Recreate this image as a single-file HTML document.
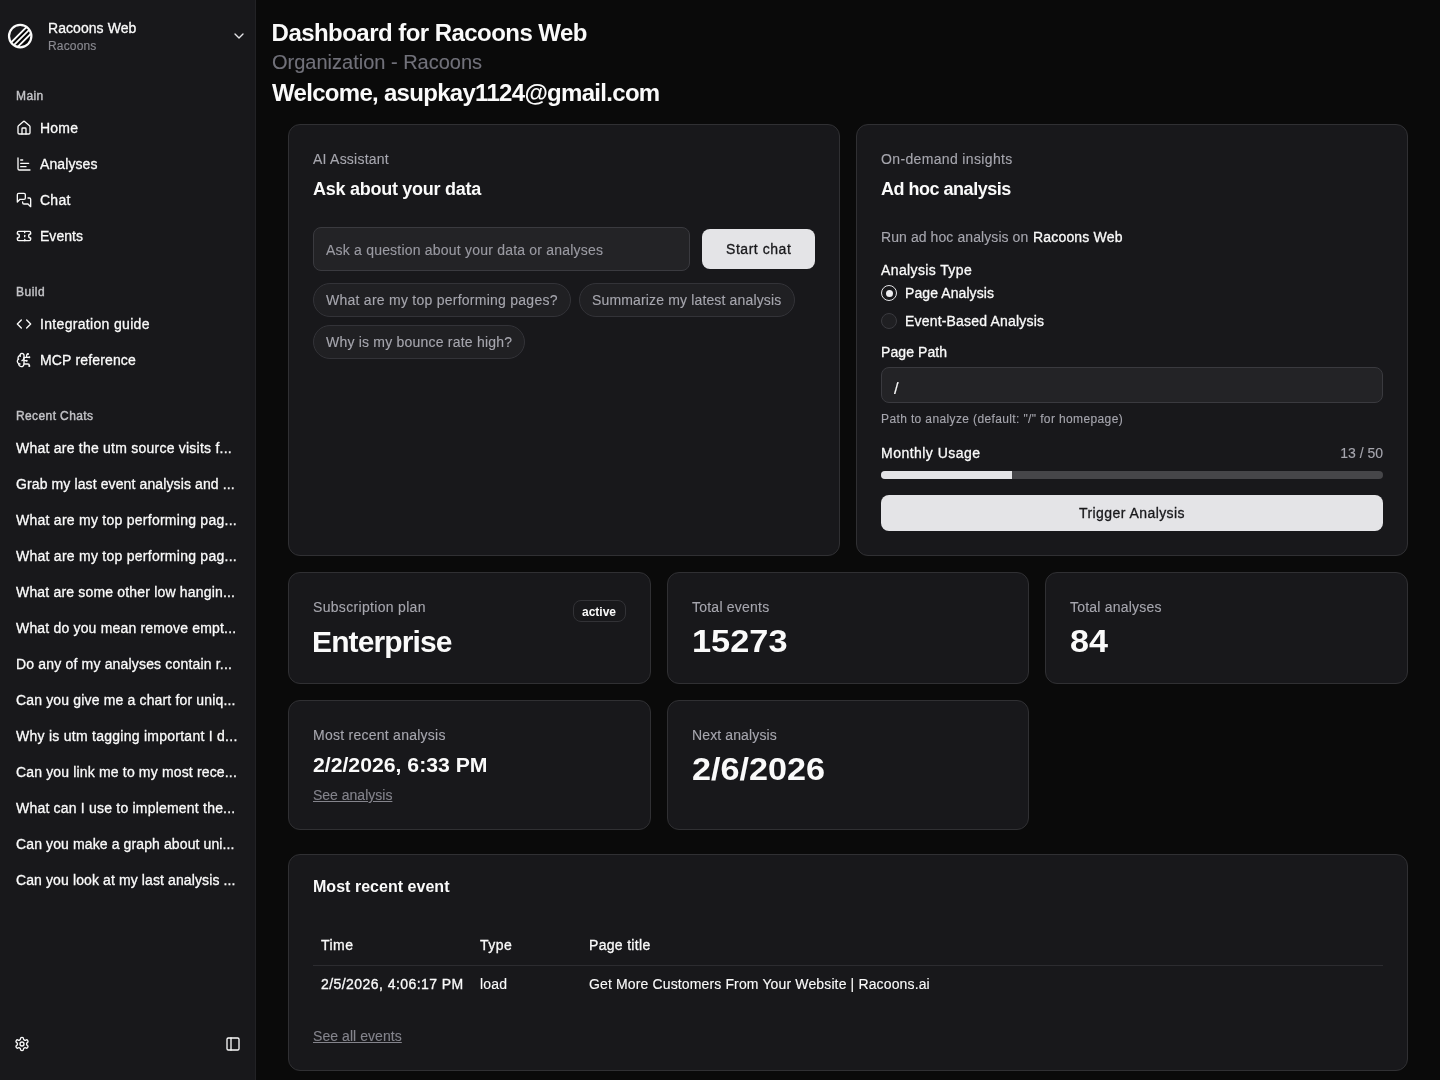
<!DOCTYPE html>
<html lang="en">
<head>
<meta charset="utf-8">
<title>Dashboard for Racoons Web</title>
<style>
*{box-sizing:border-box;margin:0;padding:0}
html,body{width:1440px;height:1080px;overflow:hidden;background:#0a0a0a}
body{font-family:"Liberation Sans",sans-serif;color:#fafafa;font-size:14px;-webkit-font-smoothing:antialiased;position:relative;will-change:transform}
.t{position:absolute;white-space:nowrap;line-height:1;display:block;-webkit-text-stroke:.12px currentColor}
.b{font-weight:700;-webkit-text-stroke:0}
svg{display:block}
/* sidebar */
#sb{position:absolute;left:0;top:0;width:256px;height:1080px;background:#18181b;border-right:1px solid #222225}
.ic{position:absolute;width:16px;height:16px;stroke:#fafafa;fill:none;stroke-width:2;stroke-linecap:round;stroke-linejoin:round}
.lab{font-size:12px;font-weight:400;color:#c2c2c6;-webkit-text-stroke:.4px #c2c2c6}
.m{-webkit-text-stroke:.3px currentColor}
.nav{font-size:14px;font-weight:400;color:#fafafa;left:40px;-webkit-text-stroke:.3px #fafafa}
.chat{font-size:14px;font-weight:400;color:#fafafa;left:16px;-webkit-text-stroke:.3px #fafafa}
/* main */
.card{position:absolute;background:#18181b;border:1px solid #303033;border-radius:12px}
.mut{color:#a6a6ae}
.sx{transform-origin:0 0}
.inp{position:absolute;background:#232326;border:1px solid #3a3a3f;border-radius:8px}
.btn{position:absolute;background:#e4e4e7;border-radius:8px;color:#18181b}
.chip{position:absolute;height:34px;border:1px solid #333338;border-radius:17px;background:#202023}
</style>
</head>
<body>
<div id="sb">
  <svg style="position:absolute;left:7px;top:23px" width="26" height="26" viewBox="-1 -1 26 26" fill="none">
    <clipPath id="lc"><circle cx="12.2" cy="12.1" r="11.2"/></clipPath>
    <g clip-path="url(#lc)"><path d="M-2 23.6 23.6 -2 30 30Z" fill="#050506"/>
    <path d="M-2 23.6 23.6 -2M-2 29 29 -2M-2 34.6 34.6 -2" stroke="#fafafa" stroke-width="1.85"/></g>
    <circle cx="12.2" cy="12.1" r="11.2" stroke="#fafafa" stroke-width="2.2"/>
  </svg>
  <span class="t m" style="left:48px;top:21px;font-size:14px;letter-spacing:0.061px">Racoons Web</span>
  <span class="t" style="left:48px;top:40px;font-size:12px;color:#8b8b92;letter-spacing:0.154px">Racoons</span>
  <svg class="ic" style="left:231px;top:28px;stroke:#e4e4e7" viewBox="0 0 24 24"><path d="m6 9 6 6 6-6"/></svg>

  <span class="t lab" style="left:16px;top:90px;letter-spacing:0.428px">Main</span>
  <svg class="ic" style="left:16px;top:120px" viewBox="0 0 24 24"><path d="M15 21v-8a1 1 0 0 0-1-1h-4a1 1 0 0 0-1 1v8"/><path d="M3 10a2 2 0 0 1 .709-1.528l7-5.999a2 2 0 0 1 2.582 0l7 5.999A2 2 0 0 1 21 10v9a2 2 0 0 1-2 2H5a2 2 0 0 1-2-2z"/></svg>
  <span class="t nav" style="top:121px;letter-spacing:0.214px">Home</span>
  <svg class="ic" style="left:16px;top:156px" viewBox="0 0 24 24"><path d="M3 3v16a2 2 0 0 0 2 2h16"/><path d="M7 16h8"/><path d="M7 11h12"/><path d="M7 6h3"/></svg>
  <span class="t nav" style="top:157px;letter-spacing:0.098px">Analyses</span>
  <svg class="ic" style="left:16px;top:192px" viewBox="0 0 24 24"><path d="M14 9a2 2 0 0 1-2 2H6l-4 4V4a2 2 0 0 1 2-2h8a2 2 0 0 1 2 2z"/><path d="M18 9h2a2 2 0 0 1 2 2v11l-4-4h-6a2 2 0 0 1-2-2v-1"/></svg>
  <span class="t nav" style="top:193px;letter-spacing:0.241px">Chat</span>
  <svg class="ic" style="left:16px;top:228px" viewBox="0 0 24 24"><path d="M2 9a3 3 0 0 1 0 6v2a2 2 0 0 0 2 2h16a2 2 0 0 0 2-2v-2a3 3 0 0 1 0-6V7a2 2 0 0 0-2-2H4a2 2 0 0 0-2 2Z"/><path d="M13 5v2"/><path d="M13 17v2"/><path d="M13 11v2"/></svg>
  <span class="t nav" style="top:229px;letter-spacing:0.037px">Events</span>

  <span class="t lab" style="left:16px;top:286px;letter-spacing:0.478px">Build</span>
  <svg class="ic" style="left:16px;top:316px" viewBox="0 0 24 24"><path d="m16 18 6-6-6-6"/><path d="m8 6-6 6 6 6"/></svg>
  <span class="t nav" style="top:317px;letter-spacing:0.324px">Integration guide</span>
  <svg class="ic" style="left:16px;top:352px" viewBox="0 0 24 24"><path d="M12 5a3 3 0 1 0-5.997.125 4 4 0 0 0-2.526 5.77 4 4 0 0 0 .556 6.588A4 4 0 1 0 12 18Z"/><path d="M9 13a4.500 4.500 0 0 0 3-4"/><path d="M6.003 5.125A3 3 0 0 0 6.401 6.500"/><path d="M3.477 10.896a4 4 0 0 1 .585-.396"/><path d="M6 18a4 4 0 0 1-1.967-.516"/><path d="M12 13h4"/><path d="M12 18h6a2 2 0 0 1 2 2v1"/><path d="M12 8h8"/><path d="M16 8V5a2 2 0 0 1 2-2"/><circle cx="16" cy="13" r=".5"/><circle cx="18" cy="3" r=".5"/><circle cx="20" cy="21" r=".5"/><circle cx="20" cy="8" r=".5"/></svg>
  <span class="t nav" style="top:353px;letter-spacing:0.158px">MCP reference</span>

  <span class="t lab" style="left:16px;top:410px;letter-spacing:0.391px">Recent Chats</span>
  <span class="t chat" style="top:441px;letter-spacing:0.234px">What are the utm source visits f...</span>
  <span class="t chat" style="top:477px;letter-spacing:0.113px">Grab my last event analysis and ...</span>
  <span class="t chat" style="top:513px;letter-spacing:0.258px">What are my top performing pag...</span>
  <span class="t chat" style="top:549px;letter-spacing:0.258px">What are my top performing pag...</span>
  <span class="t chat" style="top:585px;letter-spacing:0.18px">What are some other low hangin...</span>
  <span class="t chat" style="top:621px;letter-spacing:0.178px">What do you mean remove empt...</span>
  <span class="t chat" style="top:657px;letter-spacing:0.175px">Do any of my analyses contain r...</span>
  <span class="t chat" style="top:693px;letter-spacing:0.159px">Can you give me a chart for uniq...</span>
  <span class="t chat" style="top:729px;letter-spacing:0.261px">Why is utm tagging important I d...</span>
  <span class="t chat" style="top:765px;letter-spacing:0.16px">Can you link me to my most rece...</span>
  <span class="t chat" style="top:801px;letter-spacing:0.205px">What can I use to implement the...</span>
  <span class="t chat" style="top:837px;letter-spacing:0.115px">Can you make a graph about uni...</span>
  <span class="t chat" style="top:873px;letter-spacing:0.11px">Can you look at my last analysis ...</span>

  <svg class="ic" style="left:14px;top:1036px" viewBox="0 0 24 24"><path d="M12.22 2h-.44a2 2 0 0 0-2 2v.18a2 2 0 0 1-1 1.730l-.43.25a2 2 0 0 1-2 0l-.15-.08a2 2 0 0 0-2.730.73l-.22.38a2 2 0 0 0 .73 2.730l.15.1a2 2 0 0 1 1 1.720v.51a2 2 0 0 1-1 1.740l-.15.09a2 2 0 0 0-.73 2.730l.22.38a2 2 0 0 0 2.730.73l.15-.08a2 2 0 0 1 2 0l.43.25a2 2 0 0 1 1 1.730V20a2 2 0 0 0 2 2h.44a2 2 0 0 0 2-2v-.18a2 2 0 0 1 1-1.730l.43-.25a2 2 0 0 1 2 0l.15.08a2 2 0 0 0 2.730-.73l.22-.39a2 2 0 0 0-.73-2.730l-.15-.08a2 2 0 0 1-1-1.740v-.5a2 2 0 0 1 1-1.740l.15-.09a2 2 0 0 0 .73-2.730l-.22-.38a2 2 0 0 0-2.730-.73l-.15.08a2 2 0 0 1-2 0l-.43-.25a2 2 0 0 1-1-1.730V4a2 2 0 0 0-2-2z"/><circle cx="12" cy="12" r="3"/></svg>
  <svg class="ic" style="left:225px;top:1036px" viewBox="0 0 24 24"><rect width="18" height="18" x="3" y="3" rx="2"/><path d="M9 3v18"/></svg>
</div>

<!-- MAIN -->
<span class="t b" style="left:271.6px;top:21px;font-size:24px;letter-spacing:-0.543px">Dashboard for Racoons Web</span>
<span class="t" style="left:272px;top:52px;font-size:20px;color:#71717a">Organization - Racoons</span>
<span class="t b" style="left:272px;top:81px;font-size:24px;letter-spacing:-0.7px">Welcome, asupkay1124@gmail.com</span>

<!-- card 1 -->
<div class="card" style="left:288px;top:124px;width:552px;height:432px"></div>
<span class="t mut" style="left:313px;top:152px;letter-spacing:0.236px">AI Assistant</span>
<span class="t b" style="left:313px;top:180px;font-size:18px;letter-spacing:-0.266px">Ask about your data</span>
<div class="inp" style="left:313px;top:227px;width:377px;height:44px"></div>
<span class="t" style="left:326px;top:243px;color:#9a9aa2;letter-spacing:0.207px">Ask a question about your data or analyses</span>
<div class="btn" style="left:702px;top:229px;width:113px;height:40px"></div>
<span class="t m" style="left:726px;top:242px;color:#18181b;letter-spacing:0.542px">Start chat</span>
<div class="chip" style="left:313px;top:283px;width:258px"></div>
<span class="t mut" style="left:326px;top:293px;letter-spacing:0.255px">What are my top performing pages?</span>
<div class="chip" style="left:579px;top:283px;width:216px"></div>
<span class="t mut" style="left:592px;top:293px;letter-spacing:0.151px">Summarize my latest analysis</span>
<div class="chip" style="left:313px;top:325px;width:212px"></div>
<span class="t mut" style="left:326px;top:335px;letter-spacing:0.21px">Why is my bounce rate high?</span>

<!-- card 2 -->
<div class="card" style="left:856px;top:124px;width:552px;height:432px"></div>
<span class="t mut" style="left:881px;top:152px;letter-spacing:0.353px">On-demand insights</span>
<span class="t b" style="left:881px;top:180px;font-size:18px;letter-spacing:-0.487px">Ad hoc analysis</span>
<span class="t mut" style="left:881px;top:230px;letter-spacing:0.083px">Run ad hoc analysis on</span>
<span class="t m" style="left:1033px;top:230px;letter-spacing:0.181px">Racoons Web</span>
<span class="t m" style="left:881px;top:263px;letter-spacing:0.381px">Analysis Type</span>
<div style="position:absolute;left:881px;top:285px;width:16px;height:16px;border-radius:50%;border:1.25px solid #e4e4e7"></div>
<div style="position:absolute;left:885.5px;top:289.5px;width:7px;height:7px;border-radius:50%;background:#ededf0"></div>
<span class="t m" style="left:905px;top:286px;letter-spacing:0.087px">Page Analysis</span>
<div style="position:absolute;left:881px;top:313px;width:16px;height:16px;border-radius:50%;border:1px solid #3a3a3f;background:#1f1f22"></div>
<span class="t m" style="left:905px;top:314px;letter-spacing:0.189px">Event-Based Analysis</span>
<span class="t m" style="left:881px;top:345px;letter-spacing:0.089px">Page Path</span>
<div class="inp" style="left:881px;top:367px;width:502px;height:36px"></div>
<span class="t" style="left:894px;top:379.5px;font-size:16.5px">/</span>
<span class="t mut" style="left:881px;top:413px;font-size:12px;letter-spacing:0.374px">Path to analyze (default: "/" for homepage)</span>
<span class="t m" style="left:881px;top:446px;letter-spacing:0.467px">Monthly Usage</span>
<span class="t mut" style="right:57px;top:446px">13 / 50</span>
<div style="position:absolute;left:881px;top:471px;width:502px;height:8px;border-radius:4px;background:#464649;overflow:hidden"><div style="width:131px;height:8px;background:#e4e4e7"></div></div>
<div class="btn" style="left:881px;top:495px;width:502px;height:36px"></div>
<span class="t m" style="left:1079px;top:506px;color:#18181b;letter-spacing:0.435px">Trigger Analysis</span>

<!-- row 2 -->
<div class="card" style="left:288px;top:572px;width:363px;height:112px"></div>
<span class="t mut" style="left:313px;top:600px;letter-spacing:0.318px">Subscription plan</span>
<span class="t b" style="left:312px;top:627px;font-size:30px;letter-spacing:-0.877px">Enterprise</span>
<div style="position:absolute;left:573px;top:600px;width:53px;height:22px;border:1px solid #323236;border-radius:8px"></div>
<span class="t b" style="left:582px;top:605.5px;font-size:12px">active</span>

<div class="card" style="left:667px;top:572px;width:362px;height:112px"></div>
<span class="t mut" style="left:692px;top:600px;letter-spacing:0.23px">Total events</span>
<span class="t sx b" style="left:692px;top:626px;font-size:31px;transform:scaleX(1.1076)">15273</span>

<div class="card" style="left:1045px;top:572px;width:363px;height:112px"></div>
<span class="t mut" style="left:1070px;top:600px;letter-spacing:0.206px">Total analyses</span>
<span class="t sx b" style="left:1070px;top:626px;font-size:31px;transform:scaleX(1.1019)">84</span>

<!-- row 3 -->
<div class="card" style="left:288px;top:700px;width:363px;height:130px"></div>
<span class="t mut" style="left:313px;top:728px;letter-spacing:0.257px">Most recent analysis</span>
<span class="t sx b" style="left:313px;top:755px;font-size:20px;transform:scaleX(1.0604)">2/2/2026, 6:33 PM</span>
<span class="t" style="left:313px;top:788px;color:#84848c;text-decoration:underline">See analysis</span>

<div class="card" style="left:667px;top:700px;width:362px;height:130px"></div>
<span class="t mut" style="left:692px;top:728px;letter-spacing:0.124px">Next analysis</span>
<span class="t sx b" style="left:692px;top:754px;font-size:31px;transform:scaleX(1.1022)">2/6/2026</span>

<!-- events -->
<div class="card" style="left:288px;top:854px;width:1120px;height:217px"></div>
<span class="t b" style="left:313px;top:879px;font-size:16px;letter-spacing:0.028px">Most recent event</span>
<span class="t m" style="left:321px;top:938px;letter-spacing:0.469px">Time</span>
<span class="t m" style="left:480px;top:938px;letter-spacing:0.464px">Type</span>
<span class="t m" style="left:589px;top:938px;letter-spacing:0.314px">Page title</span>
<div style="position:absolute;left:313px;top:965px;width:1070px;height:1px;background:#2c2c30"></div>
<span class="t m" style="left:321px;top:977px;letter-spacing:0.441px">2/5/2026, 4:06:17 PM</span>
<span class="t" style="left:480px;top:977px;letter-spacing:0.177px">load</span>
<span class="t" style="left:589px;top:977px;letter-spacing:0.138px">Get More Customers From Your Website | Racoons.ai</span>
<span class="t" style="left:313px;top:1029px;color:#84848c;text-decoration:underline;letter-spacing:0.061px">See all events</span>
</body>
</html>
